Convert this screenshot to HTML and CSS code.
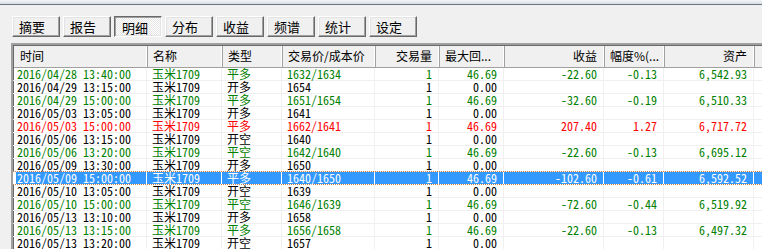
FILE: index.html
```html
<!DOCTYPE html>
<html lang="zh-CN">
<head>
    <meta charset="UTF-8">
    <title>明细</title>
    <link rel="stylesheet" href="styles.css">
</head>
<body>
    <div class="titlebar"></div>

    <!-- tab buttons -->
    <div class="toolbar">
        <span class="btn">摘要</span>
        <span class="btn">报告</span>
        <span class="btn pressed">明细</span>
        <span class="btn">分布</span>
        <span class="btn">收益</span>
        <span class="btn">频谱</span>
        <span class="btn">统计</span>
        <span class="btn">设定</span>
    </div>

    <!-- trade list -->
    <div class="list">
        <div class="row head">
            <span class="c">时间</span>
            <span class="c">名称</span>
            <span class="c">类型</span>
            <span class="c">交易价/成本价</span>
            <span class="c r">交易量</span>
            <span class="c">最大回...</span>
            <span class="c r">收益</span>
            <span class="c">幅度%(...</span>
            <span class="c r">资产</span>
            <span class="c"></span>
        </div>

        <div class="row green">
            <span class="c">2016/04/28 13:40:00</span><span class="c">玉米1709</span><span class="c">平多</span><span class="c">1632/1634</span><span class="c r">1</span><span class="c r">46.69</span><span class="c r">-22.60</span><span class="c r">-0.13</span><span class="c r">6,542.93</span><span class="c"></span>
        </div>
        <div class="row">
            <span class="c">2016/04/29 13:15:00</span><span class="c">玉米1709</span><span class="c">开多</span><span class="c">1654</span><span class="c r">1</span><span class="c r">0.00</span><span class="c r"></span><span class="c r"></span><span class="c r"></span><span class="c"></span>
        </div>
        <div class="row green">
            <span class="c">2016/04/29 15:00:00</span><span class="c">玉米1709</span><span class="c">平多</span><span class="c">1651/1654</span><span class="c r">1</span><span class="c r">46.69</span><span class="c r">-32.60</span><span class="c r">-0.19</span><span class="c r">6,510.33</span><span class="c"></span>
        </div>
        <div class="row">
            <span class="c">2016/05/03 13:05:00</span><span class="c">玉米1709</span><span class="c">开多</span><span class="c">1641</span><span class="c r">1</span><span class="c r">0.00</span><span class="c r"></span><span class="c r"></span><span class="c r"></span><span class="c"></span>
        </div>
        <div class="row red">
            <span class="c">2016/05/03 15:00:00</span><span class="c">玉米1709</span><span class="c">平多</span><span class="c">1662/1641</span><span class="c r">1</span><span class="c r">46.69</span><span class="c r">207.40</span><span class="c r">1.27</span><span class="c r">6,717.72</span><span class="c"></span>
        </div>
        <div class="row">
            <span class="c">2016/05/06 13:15:00</span><span class="c">玉米1709</span><span class="c">开空</span><span class="c">1640</span><span class="c r">1</span><span class="c r">0.00</span><span class="c r"></span><span class="c r"></span><span class="c r"></span><span class="c"></span>
        </div>
        <div class="row green">
            <span class="c">2016/05/06 13:20:00</span><span class="c">玉米1709</span><span class="c">平空</span><span class="c">1642/1640</span><span class="c r">1</span><span class="c r">46.69</span><span class="c r">-22.60</span><span class="c r">-0.13</span><span class="c r">6,695.12</span><span class="c"></span>
        </div>
        <div class="row">
            <span class="c">2016/05/09 13:30:00</span><span class="c">玉米1709</span><span class="c">开多</span><span class="c">1650</span><span class="c r">1</span><span class="c r">0.00</span><span class="c r"></span><span class="c r"></span><span class="c r"></span><span class="c"></span>
        </div>
        <div class="row selected">
            <span class="c">2016/05/09 15:00:00</span><span class="c">玉米1709</span><span class="c">平多</span><span class="c">1640/1650</span><span class="c r">1</span><span class="c r">46.69</span><span class="c r">-102.60</span><span class="c r">-0.61</span><span class="c r">6,592.52</span><span class="c"></span>
        </div>
        <div class="row">
            <span class="c">2016/05/10 13:05:00</span><span class="c">玉米1709</span><span class="c">开空</span><span class="c">1639</span><span class="c r">1</span><span class="c r">0.00</span><span class="c r"></span><span class="c r"></span><span class="c r"></span><span class="c"></span>
        </div>
        <div class="row green">
            <span class="c">2016/05/10 15:00:00</span><span class="c">玉米1709</span><span class="c">平空</span><span class="c">1646/1639</span><span class="c r">1</span><span class="c r">46.69</span><span class="c r">-72.60</span><span class="c r">-0.44</span><span class="c r">6,519.92</span><span class="c"></span>
        </div>
        <div class="row">
            <span class="c">2016/05/13 13:10:00</span><span class="c">玉米1709</span><span class="c">开多</span><span class="c">1658</span><span class="c r">1</span><span class="c r">0.00</span><span class="c r"></span><span class="c r"></span><span class="c r"></span><span class="c"></span>
        </div>
        <div class="row green">
            <span class="c">2016/05/13 13:15:00</span><span class="c">玉米1709</span><span class="c">平多</span><span class="c">1656/1658</span><span class="c r">1</span><span class="c r">46.69</span><span class="c r">-22.60</span><span class="c r">-0.13</span><span class="c r">6,497.32</span><span class="c"></span>
        </div>
        <div class="row">
            <span class="c">2016/05/13 13:20:00</span><span class="c">玉米1709</span><span class="c">开空</span><span class="c">1657</span><span class="c r">1</span><span class="c r">0.00</span><span class="c r"></span><span class="c r"></span><span class="c r"></span><span class="c"></span>
        </div>
    </div>
</body>
</html>
```

FILE: styles.css
```css
body {
    margin: 0;
    height: 249px;
    overflow: hidden;
    background-color: #f0f0f0;
    font-family: "Noto Sans Mono CJK SC", "Noto Sans CJK SC", "DejaVu Sans Mono", monospace;
    font-size: 12px;
    color: #000;
}

/* strip of the window frame above */
.titlebar {
    height: 4px;
    background: linear-gradient(to bottom, #f4f6f9, #d6dde6);
    border-bottom: 1px solid #6f7580;
}

/* Buttons */
.toolbar {
    display: flex;
    gap: 3px;
    padding: 11px 0 0 12px;
    height: 21px;
}

.btn {
    box-sizing: border-box;
    width: 48px;
    height: 21px;
    padding: 0 0 0 6px;
    line-height: 19px;
    font-family: "Noto Sans CJK SC", sans-serif;
    font-size: 13px;
    background-color: #f0f0f0;
    border: 1px solid;
    border-color: #fff #696969 #696969 #fff;
    box-shadow: inset -1px -1px #a0a0a0, inset 1px 1px #e3e3e3;
}

.btn.pressed {
    padding-left: 7px;
    line-height: 21px;
    border-color: #696969 #fff #fff #696969;
    box-shadow: inset 1px 1px #a0a0a0, inset -1px -1px #e3e3e3;
    background: repeating-conic-gradient(#fff 0 25%, #e6e6e6 0 50%) 0 0 / 2px 2px;
}

/* List view */
.list {
    margin: 6px 0 0 11px;
    width: 751px;
    background-color: #fff;
    border-top: 2px solid #a0a0a0;
    border-left: 2px solid #a0a0a0;
    box-shadow: inset 1px 1px #696969;
}

.row {
    display: grid;
    grid-template-columns: 134px 75px 60px 93px 64px 65px 100px 60px 90px 1fr;
    box-sizing: border-box;
    height: 13px;
    border-bottom: 1px solid #f0f0f0;
    line-height: 12px;
    white-space: nowrap;
}

.c {
    box-sizing: border-box;
    padding: 0 6px 0 5px;
    border-right: 1px solid #f0f0f0;
}

.c:first-child {
    padding-left: 4px;
}

.r {
    text-align: right;
}

.row.head {
    height: 22px;
    line-height: 20px;
    background-color: #f0f0f0;
    border-bottom: 1px solid #a0a0a0;
    font-family: "Noto Sans CJK SC", sans-serif;
    margin-top: 1px;
    margin-left: 1px;
}

.row.head .c {
    padding: 0 7px 0 5px;
    border-right: 1px solid #a0a0a0;
    box-shadow: inset -1px 0 #fff;
}

.row.head .c:first-child {
    padding-left: 6px;
}

.green {
    color: #008000;
}

.red {
    color: #ff0000;
}

.row.selected {
    color: #fff;
    border-top: 1px dotted #d08040;
    border-bottom: 1px dotted #d08040;
    margin-top: -1px;
    height: 14px;
}

.row.selected .c {
    background-color: #3399ff;
    border-right-color: #fff;
}

.row.selected .c:first-child {
    box-shadow: inset 3px 0 #fff;
}
```
